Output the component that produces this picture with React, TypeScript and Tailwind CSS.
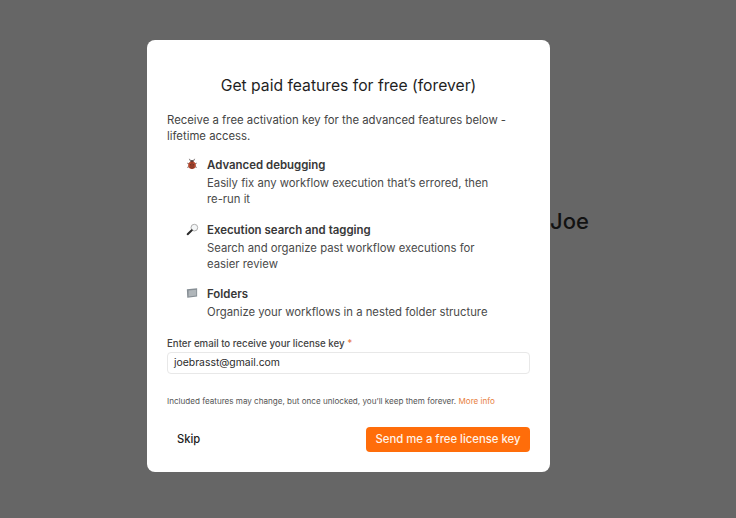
const features = [
  {
    icon: <BugIcon />,
    title: "Advanced debugging",
    lines: "Easily fix any workflow execution that’s errored, then re-run it",
  },
  {
    icon: <SearchIcon />,
    title: "Execution search and tagging",
    lines: "Search and organize past workflow executions for easier review",
  },
  {
    icon: <FolderIcon />,
    title: "Folders",
    lines: "Organize your workflows in a nested folder structure",
  },
];

function BugIcon() {
  return (
    <svg width="12" height="12" viewBox="0 0 14 14" fill="none">
      <path d="M4 1 5.5 4M10 1 8.5 4M1.5 6 3.5 7M12.5 6 10.5 7M1.5 11 3.5 10M12.5 11 10.5 10" stroke="#4a4040" strokeWidth="0.9" />
      <circle cx="7" cy="4" r="1.8" fill="#3a2e2e" />
      <circle cx="7" cy="8.5" r="4.4" fill="#b5482f" />
      <path d="M7 5V12.9" stroke="#4a2a24" strokeWidth="0.7" />
      <circle cx="5.2" cy="8" r="0.8" fill="#4a2a24" />
      <circle cx="8.8" cy="8" r="0.8" fill="#4a2a24" />
      <circle cx="5.4" cy="10.6" r="0.6" fill="#4a2a24" />
      <circle cx="8.6" cy="10.6" r="0.6" fill="#4a2a24" />
    </svg>
  );
}

function SearchIcon() {
  return (
    <svg width="13" height="13" viewBox="0 0 14 14" fill="none">
      <circle cx="9" cy="5" r="3.6" fill="#f4f6f7" stroke="#a8a8a8" strokeWidth="1" />
      <path d="M6.2 7.8 1.8 12" stroke="#2a2a2a" strokeWidth="2.2" strokeLinecap="round" />
    </svg>
  );
}

function FolderIcon() {
  return (
    <svg width="12" height="12" viewBox="0 0 14 14" fill="none">
      <path d="M1 2.5 13 1.5V11L1.5 12.5Z" fill="#868e94" />
      <path d="M3 4 12 3.2V10L3 11.2Z" fill="#b0b6ba" />
    </svg>
  );
}

export default function App() {
  return (
    <div className="relative h-[518px] w-[736px] overflow-hidden bg-[#666666] pl-[147px] pt-[40px] font-['Inter',sans-serif]">
      <span className="absolute left-[550px] top-[207px] text-[22px] leading-[28px] font-medium text-[#121212]">
        Joe
      </span>

      <div className="relative flex h-[432px] w-[403px] flex-col rounded-[8px] bg-white px-[20px]">
        <h2 className="mt-[34px] text-center text-[15.7px] leading-[24px] font-normal text-[#1f1f1f]">
          Get paid features for free (forever)
        </h2>

        <p className="mt-[14px] text-[11.35px] leading-[16px] text-[#444444]">
          Receive a free activation key for the advanced features below - lifetime access.
        </p>

        <div className="mt-[13px] flex flex-col gap-[14.5px] pl-[20px]">
          {features.map((f) => (
            <div key={f.title} className="flex gap-[14px]">
              <div className="w-[6px] shrink-0 pt-[1px]">
                <div className="-ml-[1px] w-[14px]">{f.icon}</div>
              </div>
              <div className="w-[292px] text-[11.3px] leading-[16px]">
                <div className="mb-[2px] text-[11.45px] font-semibold text-[#383838]">{f.title}</div>
                <div className="text-[#4a4a4a]">{f.lines}</div>
              </div>
            </div>
          ))}
        </div>

        <label className="mt-[17px] text-[9.7px] leading-[14px] font-medium text-[#444444]">
          Enter email to receive your license key <span className="text-[#e8794a]">*</span>
        </label>
        <div className="mt-[1px] flex h-[22px] items-center rounded-[4px] border border-[#e8e8e8] px-[6px] text-[10.4px] text-[#2a2a2a]">
          joebrasst@gmail.com
        </div>

        <p className="mt-[21px] text-[8.08px] leading-[12px] whitespace-nowrap text-[#555555]">
          Included features may change, but once unlocked, you’ll keep them forever.{" "}
          <span className="text-[#e8813f]">More info</span>
        </p>

        <div className="mt-[20px] flex items-center justify-between">
          <span className="pl-[10px] text-[11.2px] font-medium text-[#222222]">Skip</span>
          <div className="flex h-[25px] w-[164px] items-center justify-center rounded-[4px] bg-[#ff6d0a] text-[11.3px] font-medium text-[#fff3e8]">
            Send me a free license key
          </div>
        </div>
      </div>
    </div>
  );
}
